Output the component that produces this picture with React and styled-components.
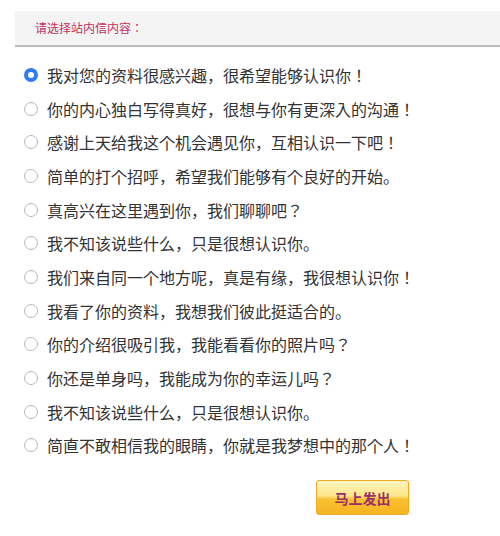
import React, { useState } from 'react';
import styled, { createGlobalStyle } from 'styled-components';

const GlobalStyle = createGlobalStyle`
  body {
    margin: 0;
    background: #fff;
    font-family: "Noto Sans CJK JP", "Noto Sans CJK SC", sans-serif;
    text-spacing-trim: space-all;
  }
`;

const Page = styled.div`
  width: 500px;
  height: 536px;
  padding-left: 15px;
  box-sizing: border-box;
  overflow: hidden;
`;

const Header = styled.div`
  margin-top: 11px;
  height: 34px;
  line-height: 34px;
  padding-left: 20px;
  background: #f4f4f4;
  border-bottom: 2px solid #bcbcbc;
  color: #c2325f;
  font-size: 12px;
`;

const List = styled.div`
  display: flex;
  flex-direction: column;
  margin-top: 11px;
`;

const Row = styled.label`
  display: flex;
  align-items: center;
  height: 33.7px;
  color: #333;
  font-size: 16px;
  cursor: pointer;
`;

const Radio = styled.input`
  appearance: none;
  box-sizing: border-box;
  width: 14px;
  height: 14px;
  margin: 0 9px 0 9px;
  border-radius: 50%;
  border: 1px solid #b8b8b8;
  background: #fff;
  flex-shrink: 0;

  &:checked {
    border: 4px solid #2f7bf5;
    background: #fff;
  }
`;

const Footer = styled.div`
  display: flex;
  padding-left: 301px;
  margin-top: 18px;
`;

const SendButton = styled.button`
  width: 93px;
  height: 35px;
  border: 1px solid #efaa2a;
  border-radius: 3px;
  background: linear-gradient(#fff6c0 0%, #fde68a 45%, #f9c232 55%, #f5b320 100%);
  color: #9c2f6a;
  font-family: inherit;
  font-size: 14px;
  font-weight: bold;
  cursor: pointer;
`;

const messages = [
  '我对您的资料很感兴趣，很希望能够认识你！',
  '你的内心独白写得真好，很想与你有更深入的沟通！',
  '感谢上天给我这个机会遇见你，互相认识一下吧！',
  '简单的打个招呼，希望我们能够有个良好的开始。',
  '真高兴在这里遇到你，我们聊聊吧？',
  '我不知该说些什么，只是很想认识你。',
  '我们来自同一个地方呢，真是有缘，我很想认识你！',
  '我看了你的资料，我想我们彼此挺适合的。',
  '你的介绍很吸引我，我能看看你的照片吗？',
  '你还是单身吗，我能成为你的幸运儿吗？',
  '我不知该说些什么，只是很想认识你。',
  '简直不敢相信我的眼睛，你就是我梦想中的那个人！'
];

export default function App() {
  const [selected, setSelected] = useState(0);

  return (
    <Page>
      <GlobalStyle />
      <Header>请选择站内信内容：</Header>
      <List>
        {messages.map((text, i) => (
          <Row key={i}>
            <Radio
              type="radio"
              name="msg"
              checked={selected === i}
              onChange={() => setSelected(i)}
            />
            {text}
          </Row>
        ))}
      </List>
      <Footer>
        <SendButton>马上发出</SendButton>
      </Footer>
    </Page>
  );
}
